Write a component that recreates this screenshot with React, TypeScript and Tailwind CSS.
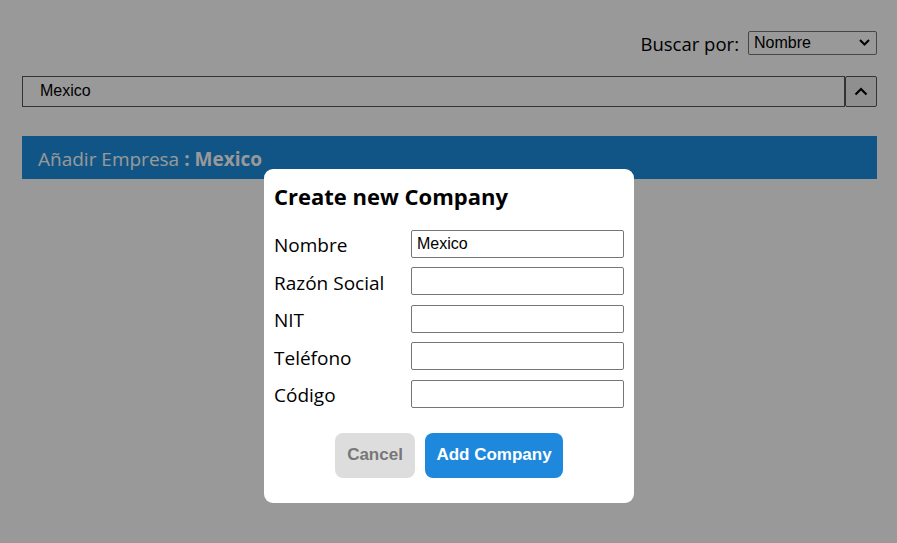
import React from 'react';

const ui = { fontFamily: '"Open Sans", "Noto Sans", sans-serif' };
const arial = { fontFamily: '"Liberation Sans", Arial, sans-serif' };

function Field({ label, value }: { label: string; value?: string }) {
  return (
    <div className="flex h-[37.5px] items-center">
      <label className="w-[137px] pt-[3px] text-[19px] text-black">{label}</label>
      <input
        readOnly
        value={value ?? ''}
        style={arial}
        className="h-[28px] w-[213px] rounded-[2px] border border-[#767676] bg-white px-[5px] text-[16px] text-black outline-none"
      />
    </div>
  );
}

export default function App() {
  return (
    <div className="relative h-[543px] w-[897px] overflow-hidden bg-white" style={ui}>
      <div className="pl-[22px] pr-[20px] pt-[28px]">
        <div className="flex items-center justify-end gap-[9px]">
          <span className="pt-[2px] text-[18.5px] text-black">Buscar por:</span>
          <div
            style={arial}
            className="flex h-[24px] w-[129px] items-center justify-between rounded-[2px] border border-[#767676] bg-white pl-[5px] pr-[6px] text-[16px] text-black"
          >
            <span>Nombre</span>
            <svg width="11" height="7" viewBox="0 0 11 7" fill="none">
              <path d="M1 1l4.5 4.5L10 1" stroke="#000" strokeWidth="2" />
            </svg>
          </div>
        </div>
        <div className="mt-[18px] flex h-[31px]">
          <div
            style={arial}
            className="flex flex-1 items-center border border-[#555] bg-white pl-[17px] text-[16px] text-black"
          >
            Mexico
          </div>
          <div className="flex w-[32px] items-center justify-center rounded-[2px] border border-[#555] bg-[#efefef]">
            <svg width="14" height="9" viewBox="0 0 14 9" fill="none">
              <path d="M1.5 7.5L7 2l5.5 5.5" stroke="#000" strokeWidth="2.2" />
            </svg>
          </div>
        </div>
        <div className="mt-[29px] flex h-[43px] items-center bg-[#1b8ede] pl-[16px] pt-[3px] text-[19px] text-white">
          Añadir Empresa <b className="ml-[5px] font-bold">: Mexico</b>
        </div>
      </div>

      <div className="absolute inset-0 bg-black/40" />

      <div className="absolute left-[264px] top-[169px] h-[334px] w-[370px] rounded-[9px] bg-white px-[10px] pt-[10px]">
        <h2 className="text-[22px] font-bold leading-[34px] text-black">Create new Company</h2>
        <div className="mt-[12px]">
          <Field label="Nombre" value="Mexico" />
          <Field label="Razón Social" />
          <Field label="NIT" />
          <Field label="Teléfono" />
          <Field label="Código" />
        </div>
        <div className="mt-[20px] flex justify-center gap-[10px]" style={arial}>
          <button className="h-[45px] w-[80px] rounded-[8px] bg-[#dddddd] text-[17px] font-bold text-[#777]">
            Cancel
          </button>
          <button className="h-[45px] w-[138px] rounded-[8px] bg-[#1e88dc] text-[17px] font-bold text-white">
            Add Company
          </button>
        </div>
      </div>
    </div>
  );
}
